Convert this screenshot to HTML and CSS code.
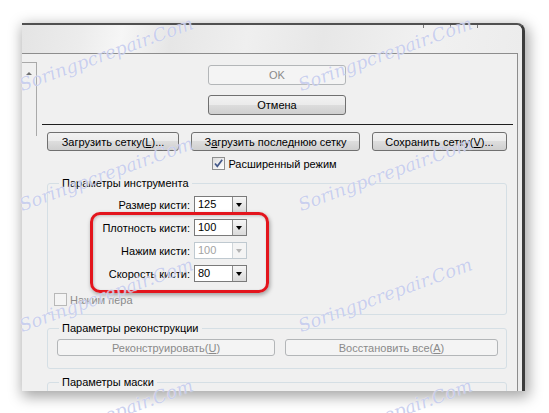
FILE: index.html
```html
<!DOCTYPE html>
<html>
    <head>
        <title>Пластика</title>
        <link rel="stylesheet" href="styles.css">
    </head>
    <body>

        <div class="dialog">
            <div class="titlebar">
                <span class="tick"></span>
                <span class="tick"></span>
                <span class="tick"></span>
            </div>

            <div class="frame">
                <div class="inner">
                    <div class="scroll"><span class="arrow-up"></span></div>

                    <div class="main">
                        <button class="btn btn-wide" disabled>OK</button>
                        <button class="btn btn-wide btn-cancel">Отмена</button>

                        <div class="sep"></div>

                        <div class="btn-row">
                            <button class="btn">Загрузить сетку(<u>L</u>)...</button>
                            <button class="btn">З<u>а</u>грузить последнюю сетку</button>
                            <button class="btn">Сохранить сетку(<u>V</u>)...</button>
                        </div>

                        <div class="check-row">
                            <span class="check">
                                <svg width="11" height="11" viewBox="0 0 11 11"><path d="M2 5.5 L4.3 8.3 L9.2 1.8" fill="none" stroke="#44598a" stroke-width="1.7"/></svg>
                            </span>
                            Расширенный режим
                        </div>

                        <fieldset class="group">
                            <legend>Параметры инструмента</legend>
                            <div class="tool-rows">
                                <div class="field-row">
                                    <span class="field-label">Размер кисти:</span>
                                    <span class="combo"><span class="combo-val">125</span><span class="combo-drop"></span></span>
                                </div>
                                <div class="field-row">
                                    <span class="field-label">Плотность кисти:</span>
                                    <span class="combo"><span class="combo-val">100</span><span class="combo-drop"></span></span>
                                </div>
                                <div class="field-row">
                                    <span class="field-label">Нажим кисти:</span>
                                    <span class="combo combo-off"><span class="combo-val">100</span><span class="combo-drop"></span></span>
                                </div>
                                <div class="field-row">
                                    <span class="field-label">Скорость кисти:</span>
                                    <span class="combo"><span class="combo-val">80</span><span class="combo-drop"></span></span>
                                </div>
                            </div>
                            <div class="pen-row">
                                <span class="check check-off"></span>
                                Нажим пера
                            </div>
                        </fieldset>

                        <fieldset class="group group-rec">
                            <legend>Параметры реконструкции</legend>
                            <div class="rec-row">
                                <button class="btn" disabled>Реконструировать(<u>U</u>)</button>
                                <button class="btn" disabled>Восстановить все(<u>A</u>)</button>
                            </div>
                        </fieldset>

                        <fieldset class="group group-mask">
                            <legend>Параметры маски</legend>
                        </fieldset>
                    </div>
                </div>
                <div class="edge"></div>
            </div>
        </div>

        <div class="highlight"></div>

        <div class="wm r1 c1">Soringpcrepair.Com</div>
        <div class="wm r1 c2">Soringpcrepair.Com</div>
        <div class="wm r2 c1">Soringpcrepair.Com</div>
        <div class="wm r2 c2">Soringpcrepair.Com</div>
        <div class="wm r3 c1">Soringpcrepair.Com</div>
        <div class="wm r3 c2">Soringpcrepair.Com</div>
        <div class="wm r4 c1">Soringpcrepair.Com</div>
        <div class="wm r4 c2">Soringpcrepair.Com</div>

    </body>
</html>
```

FILE: styles.css
```css
body{
    margin: 0;
    width: 549px;
    height: 413px;
    overflow: hidden;
    position: relative;
    background: #fff;
    font-family: "Liberation Sans", Arial, sans-serif;
    font-size: 11px;
    color: #000;
}

.dialog{
    box-sizing: border-box;
    width: 503px;
    height: 368px;
    margin: 23px 0 0 22px;
    display: flex;
    flex-direction: column;
    background: #f0f0f0;
    border-top: 2px solid #505050;
    border-right: 3px solid #3c3c3c;
    border-top-right-radius: 8px;
    box-shadow: 2px 4px 14px 2px rgba(0,0,0,0.35);
}

.titlebar{
    height: 28px;
    display: flex;
    justify-content: flex-end;
    align-items: flex-start;
    padding-right: 44px;
    gap: 26px;
    border-top-right-radius: 6px;
    background: linear-gradient(100deg, #e4e4e4 0%, #ececec 12%, #f6f6f6 20%, #e6e6e6 30%, #efefef 45%, #e7e7e7 60%, #f1f1f1 80%, #ececec 100%);
}

.tick{
    width: 1px;
    height: 3px;
    background: #7a7a7a;
}

.frame{
    flex: 1;
    display: flex;
    min-height: 0;
}

.inner{
    flex: 1;
    display: flex;
    align-items: flex-start;
    border-top: 1px solid #8d8d8d;
    border-right: 1px solid #8d8d8d;
    overflow: hidden;
}

.edge{
    width: 4px;
    background: #ececec;
}

.scroll{
    box-sizing: border-box;
    width: 15px;
    height: 74px;
    margin-top: 8px;
    padding: 9px 0 0 4px;
    border-top: 1px solid #a9a9a9;
    border-right: 1px solid #a9a9a9;
}

.arrow-up{
    display: block;
    width: 0;
    height: 0;
    border-left: 3px solid transparent;
    border-right: 3px solid transparent;
    border-bottom: 3px solid #6f6f6f;
}

.main{
    flex: 1;
    min-width: 0;
}

.btn{
    box-sizing: border-box;
    height: 19px;
    padding: 0;
    border: 1px solid #707070;
    border-radius: 3px;
    background: linear-gradient(#f2f2f2 0%, #ebebeb 50%, #dddddd 50%, #cfcfcf 100%);
    font-family: "Liberation Sans", Arial, sans-serif;
    font-size: 11px;
    color: #000;
    text-align: center;
    white-space: nowrap;
}

.btn:disabled{
    border-color: #b3b6b8;
    background: #f4f4f4;
    color: #8a8a8a;
}

.btn-wide{
    display: block;
    width: 138px;
    height: 20px;
    margin: 11px auto 0;
}

.btn-cancel{
    margin-top: 10px;
}

.sep{
    height: 1px;
    margin: 9px 4px 0 5px;
    background: #1e1e1e;
}

.btn-row{
    display: grid;
    grid-template-columns: 132px 169px 135px;
    column-gap: 12px;
    margin: 7px 10px 0;
}

.check-row{
    display: flex;
    align-items: center;
    justify-content: center;
    gap: 3px;
    height: 13px;
    margin-top: 6px;
    padding-right: 5px;
}

.check{
    box-sizing: border-box;
    display: flex;
    align-items: center;
    justify-content: center;
    width: 13px;
    height: 13px;
    border: 1px solid #8e8f8f;
    background: linear-gradient(135deg, #dcdcdc, #ffffff);
}

.check-off{
    border-color: #b8b8b8;
    background: #f4f4f4;
}

.group{
    margin: 7px 10px 0;
    padding: 6px 0 8px;
    border: 1px solid #d5dfe5;
    border-radius: 3px;
    min-width: 0;
}

.group legend{
    margin-left: 11px;
    padding: 0 3px;
    line-height: 13px;
}

.tool-rows{
    display: flex;
    flex-direction: column;
    gap: 6px;
}

.field-row{
    display: grid;
    grid-template-columns: 142px 53px;
    column-gap: 4px;
    align-items: center;
    height: 17px;
}

.field-label{
    text-align: right;
}

.combo{
    box-sizing: border-box;
    display: flex;
    height: 17px;
    border: 1px solid #7a7a7a;
    background: #fff;
}

.combo-val{
    flex: 1;
    padding-left: 3px;
    line-height: 15px;
}

.combo-drop{
    box-sizing: border-box;
    position: relative;
    width: 14px;
    border-left: 1px solid #8c8c8c;
    background: linear-gradient(#f6f6f6, #dadada);
}

.combo-drop::after{
    content: "";
    position: absolute;
    left: 3px;
    top: 6px;
    border-left: 3.5px solid transparent;
    border-right: 3.5px solid transparent;
    border-top: 4px solid #000;
}

.combo-off{
    border-color: #bfc9d0;
    color: #a3a3a3;
}

.combo-off .combo-drop{
    border-left-color: #d0d6da;
    background: #f4f4f4;
}

.combo-off .combo-drop::after{
    border-top-color: #b4b4b4;
}

.pen-row{
    display: flex;
    align-items: center;
    gap: 3px;
    height: 13px;
    margin-top: 11px;
    padding-left: 6px;
    color: #8a8a8a;
}

.group-rec{
    padding: 4px 8px 12px 9px;
}

.group-rec legend{
    margin-left: 2px;
}

.rec-row{
    display: grid;
    grid-template-columns: 218px 213px;
    column-gap: 10px;
}

.rec-row .btn{
    height: 17px;
}

.group-mask{
    height: 40px;
    padding: 0;
}

.highlight{
    position: absolute;
    left: 90px;
    top: 212px;
    width: 179px;
    height: 81px;
    box-sizing: border-box;
    border: 3px solid #e3151d;
    border-radius: 10px;
    box-shadow: 1px 2px 4px rgba(0,0,0,0.35), inset 1px 1px 3px rgba(0,0,0,0.2);
}

.wm{
    position: absolute;
    height: 18px;
    line-height: 18px;
    font-family: "DejaVu Serif", serif;
    font-style: italic;
    font-size: 18px;
    color: rgba(150,162,222,0.5);
    text-shadow: 0 0 1px #fff;
    white-space: nowrap;
    transform: rotate(-20deg);
    transform-origin: 0 100%;
    pointer-events: none;
}

.c1{ left: 23px; }
.c2{ left: 302px; }
.r1{ top: 76px; }
.r2{ top: 196px; }
.r3{ top: 317px; }
.r4{ top: 438px; }
```
